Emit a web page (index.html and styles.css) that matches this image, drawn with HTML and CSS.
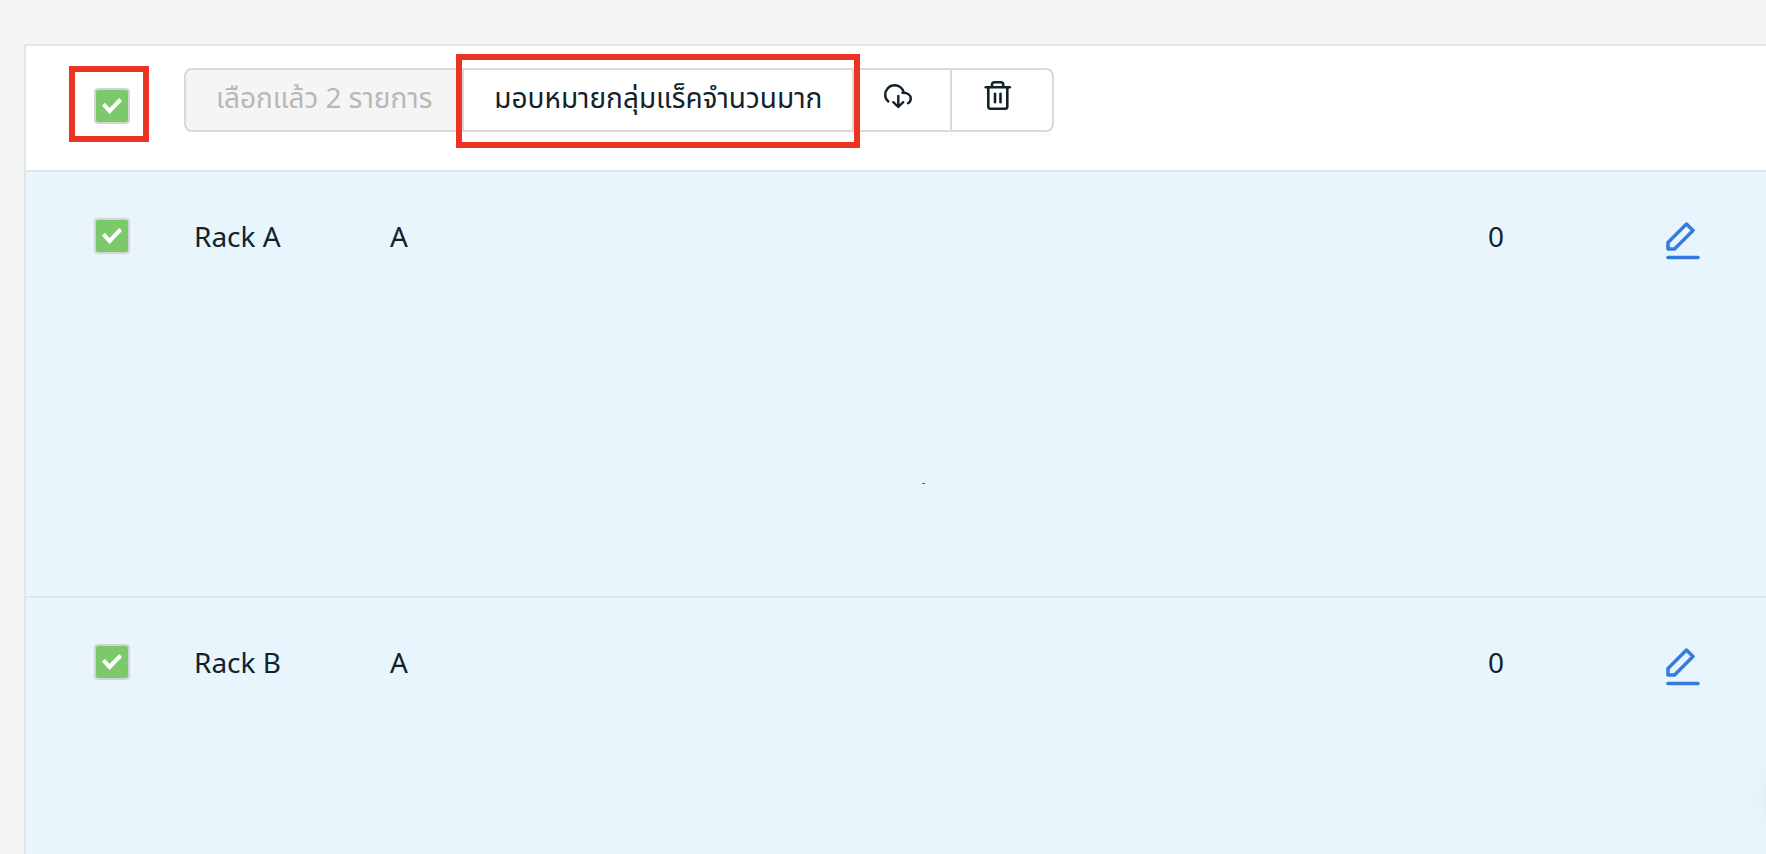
FILE: index.html
```html
<!DOCTYPE html>
<html lang="th">
<head>
<meta charset="utf-8">
<meta name="viewport" content="width=device-width, initial-scale=1">
<title>Racks</title>
<link rel="stylesheet" href="styles.css">
</head>
<body>
<svg class="sprite" aria-hidden="true">
  <symbol id="icon-edit" viewBox="0 0 34 38">
    <path d="M2 20.500 20.500 2 27 8.500 8.500 27H2Z" fill="none" stroke="currentColor" stroke-width="3.500" stroke-linejoin="round"/>
    <path d="M2 35.500H32" fill="none" stroke="currentColor" stroke-width="3.600" stroke-linecap="round"/>
  </symbol>
</svg>
<main class="page">
  <section class="panel">
    <table class="racks">
      <colgroup>
        <col class="col-check"><col class="col-name"><col><col class="col-count"><col class="col-edit">
      </colgroup>
      <thead>
        <tr>
          <th class="check-cell">
            <span class="marked">
              <input class="check" type="checkbox" checked aria-label="เลือกทั้งหมด">
              <span class="highlight highlight-check"></span>
            </span>
          </th>
          <th class="toolbar-cell" colspan="4">
            <div class="toolbar">
              <button class="btn" type="button" disabled>เลือกแล้ว 2 รายการ</button>
              <span class="marked">
                <button class="btn" type="button">มอบหมายกลุ่มแร็คจำนวนมาก</button>
                <span class="highlight highlight-assign"></span>
              </span>
              <button class="btn btn-icon" type="button" aria-label="ดาวน์โหลด">
                <svg width="28" height="28" viewBox="0 0 28 28" fill="none" stroke="currentColor" stroke-width="2.400" stroke-linecap="round" stroke-linejoin="round">
                  <path d="M4.300 18.500C2.300 16.800 1.200 14.400 1.200 11.700 1.200 6.600 5.400 2.300 10.600 2.300 15 2.300 18.600 5.200 19.700 9.300"/>
                  <path d="M18.500 9.800C23 9.200 26.800 12 26.800 15.600 26.800 17.600 25.900 19.300 24 20.300"/>
                  <path d="M14.300 13V23.800M9.300 19.200 14.300 24 19.200 19.200"/>
                </svg>
              </button>
              <button class="btn btn-icon btn-last" type="button" aria-label="ลบ">
                <svg width="32" height="32" viewBox="0 0 32 32" fill="none" stroke="currentColor" stroke-width="2.600" stroke-linecap="round" stroke-linejoin="round">
                  <path d="M3.800 6.200H27.800"/>
                  <path d="M10 6V3.600Q10 1.300 12.400 1.300H18.800Q21.200 1.300 21.200 3.600V6"/>
                  <path d="M6.300 6.500V25.500Q6.300 27.800 8.700 27.800H22.900Q25.300 27.800 25.300 25.500V6.500"/>
                  <path d="M13 12.700V21.200M18.500 12.700V21.200"/>
                </svg>
              </button>
            </div>
          </th>
        </tr>
      </thead>
      <tbody>
        <tr>
          <td class="check-cell"><input class="check" type="checkbox" checked aria-label="Rack A"></td>
          <td class="name-cell">Rack A</td>
          <td>A</td>
          <td>0</td>
          <td><a class="edit" href="#rack-a" aria-label="แก้ไข Rack A"><svg width="34" height="38"><use href="#icon-edit"/></svg></a></td>
        </tr>
        <tr>
          <td class="check-cell"><input class="check" type="checkbox" checked aria-label="Rack B"></td>
          <td class="name-cell">Rack B</td>
          <td>A</td>
          <td>0</td>
          <td><a class="edit" href="#rack-b" aria-label="แก้ไข Rack B"><svg width="34" height="38"><use href="#icon-edit"/></svg></a></td>
        </tr>
      </tbody>
    </table>
  </section>
  <span class="speck"></span>
  <span class="float-shadow"></span>
</main>
</body>
</html>
```

FILE: styles.css
```css
* { box-sizing: border-box; }

body {
  margin: 0;
  background: #f4f5f7;
  color: #12222b;
  font-family: "Noto Sans", "Noto Sans Thai", sans-serif;
  font-size: 28px;
  line-height: 44px;
}

.sprite { position: absolute; width: 0; height: 0; }

.page {
  position: relative;
  height: 100vh;
  padding: 44px 0 0 24px;
  overflow: hidden;
}

.panel {
  border: 2px solid #e3e4e6;
  border-right: 0;
  background: #fff;
}

.racks {
  width: 100%;
  table-layout: fixed;
  border-collapse: separate;
  border-spacing: 0;
}

.col-check { width: 158px; }
.col-name { width: 206px; }
.col-count { width: 178px; }
.col-edit { width: 100px; }

.racks th,
.racks td {
  padding: 42px 0 0;
  border-bottom: 2px solid #e3e4e6;
  font-weight: 400;
  text-align: left;
  vertical-align: top;
}

.racks th { height: 126px; }
.racks td { height: 426px; background: #e8f5fd; }
.racks .check-cell { padding-left: 68px; }
.racks td.check-cell { padding-top: 46px; }
.racks .name-cell { padding-left: 10px; }
.racks .toolbar-cell { padding-top: 22px; }

.check {
  appearance: none;
  display: grid;
  place-items: center;
  width: 36px;
  height: 36px;
  margin: 0;
  border: 2px solid #d4d4d4;
  border-radius: 4px;
  background: #fff;
}

.check:checked { background: #7bc96a; }

.check:checked::before {
  content: "";
  width: 20px;
  height: 16px;
  background: #fff;
  clip-path: polygon(0 48%, 14% 30%, 38% 62%, 86% 0, 100% 18%, 38% 100%);
}

.toolbar { display: flex; }

.marked { position: relative; display: flex; }

.btn {
  height: 64px;
  padding: 0 30px 6px;
  border: 2px solid #d9d9d9;
  background: #fff;
  box-shadow: 0 4px 0 rgba(0, 0, 0, 0.015);
  color: inherit;
  font: inherit;
  white-space: nowrap;
}

.btn:disabled {
  border-radius: 8px 0 0 8px;
  background: #f5f5f5;
  box-shadow: none;
  color: #b8b8b8;
}

.toolbar > * + * { margin-left: -2px; }

.btn-icon { padding-right: 38px; }
.btn-last { border-radius: 0 8px 8px 0; }
.btn-icon svg { display: block; }

.highlight {
  position: absolute;
  border: 6px solid #ea3323;
  pointer-events: none;
}

.highlight-check { inset: -22px auto auto -25px; width: 80px; height: 76px; }
.highlight-assign { inset: -14px -6px -16px -6px; }

.edit { display: block; padding-top: 8px; color: #347bdc; }
.edit svg { display: block; }

.speck {
  position: absolute;
  top: 483px;
  left: 922px;
  width: 3px;
  height: 1px;
  background: #56666e;
}

.float-shadow {
  position: absolute;
  right: -84px;
  bottom: 16px;
  width: 80px;
  height: 80px;
  border-radius: 50%;
  box-shadow: 0 0 24px rgba(0, 0, 0, 0.08);
}
```
